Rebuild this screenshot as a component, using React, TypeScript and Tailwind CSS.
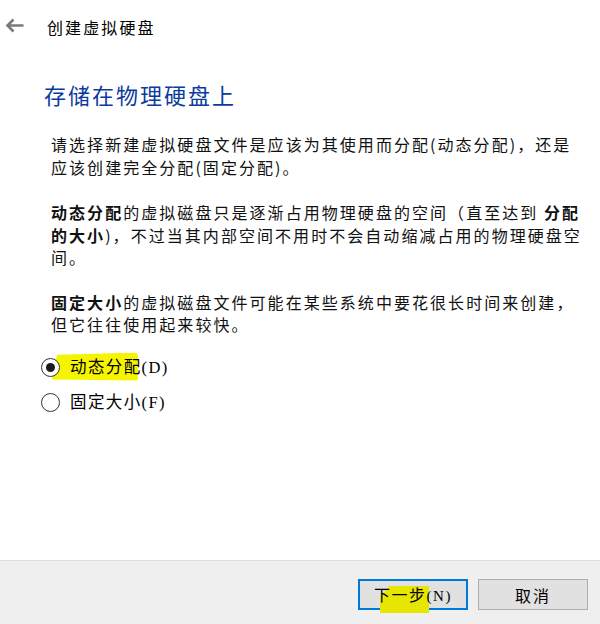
import React from "react";

const font = { fontFamily: '"Noto Sans CJK SC", "Noto Sans", sans-serif' };

function Radio({ checked }: { checked?: boolean }) {
  return (
    <span className="relative z-10 flex h-[19px] w-[19px] items-center justify-center rounded-full border-[1.5px] border-[#333] bg-white">
      {checked && <span className="h-[9px] w-[9px] rounded-full bg-[#1a1a1a]" />}
    </span>
  );
}

export default function App() {
  return (
    <div className="flex h-[624px] w-[600px] flex-col bg-white text-black" style={font}>
      <div className="flex h-[54px] items-center pl-[5px]">
        <svg width="19" height="15" viewBox="0 0 19 15" className="mb-[4px]">
          <path d="M18.5 7.5H3M8.5 1.5L2.5 7.5l6 6" fill="none" stroke="#7a7a7a" strokeWidth="2.6" />
        </svg>
        <span className="ml-[23px] text-[16px] tracking-[2.1px]">创建虚拟硬盘</span>
      </div>

      <div className="flex-1 pl-[44px] pr-[12px]">
        <h1 className="mt-[26px] text-[22px] leading-[28px] tracking-[2px] text-[#0b3b9e]">存储在物理硬盘上</h1>

        <div className="mt-[25px] pl-[7px] text-[16px] leading-[22.5px] tracking-[2.05px] text-[#111]">
          <p>
            请选择新建虚拟硬盘文件是应该为其使用而分配(动态分配)，还是
            <br />
            应该创建完全分配(固定分配)。
          </p>
          <p className="mt-[23px]">
            <b>动态分配</b>的虚拟磁盘只是逐渐占用物理硬盘的空间（直至达到 <b>分配</b>
            <br />
            <b>的大小</b>)，不过当其内部空间不用时不会自动缩减占用的物理硬盘空
            <br />
            间。
          </p>
          <p className="mt-[22px]">
            <b>固定大小</b>的虚拟磁盘文件可能在某些系统中要花很长时间来创建，
            <br />
            但它往往使用起来较快。
          </p>
        </div>

        <div className="mt-[22px] -ml-[3px] flex flex-col gap-[16px] text-[16.5px] tracking-[1.4px]">
          <label className="relative flex h-[19px] items-center gap-[10px]">
            <span className="absolute left-[11px] top-[-5px] h-[28px] w-[86px] rounded-[3px] bg-[#f5f500]" style={{ clipPath: "polygon(6% 8%, 100% 0, 100% 100%, 0 96%, 3% 40%)" }} />
            <Radio checked />
            <span className="relative">
              动态分配<span style={{ fontFamily: '"Liberation Serif", serif' }}>(D)</span>
            </span>
          </label>
          <label className="flex h-[19px] items-center gap-[10px]">
            <Radio />
            <span>
              固定大小<span style={{ fontFamily: '"Liberation Serif", serif' }}>(F)</span>
            </span>
          </label>
        </div>
      </div>

      <div className="flex h-[64px] items-start justify-end gap-[10px] border-t border-[#dcdcdc] bg-[#efefef] pr-[12px] pt-[18px]">
        <button className="relative flex h-[31px] w-[110px] items-center justify-center border-2 border-[#0078d7] bg-[#e1e1e1] text-[16px]">
          <span className="absolute left-[20px] top-[5px] h-[27px] w-[49px] bg-[#e6e600]" style={{ clipPath: "polygon(20% 0, 100% 0, 100% 100%, 0 100%, 0 40%)" }} />
          <span className="relative tracking-[1.5px]">
            下一步<span className="text-[15px]" style={{ fontFamily: '"Liberation Serif", serif' }}>(N)</span>
          </span>
        </button>
        <button className="flex h-[31px] w-[110px] items-center justify-center border border-[#adadad] bg-[#e1e1e1] text-[16px] tracking-[2px]">
          取消
        </button>
      </div>
    </div>
  );
}
